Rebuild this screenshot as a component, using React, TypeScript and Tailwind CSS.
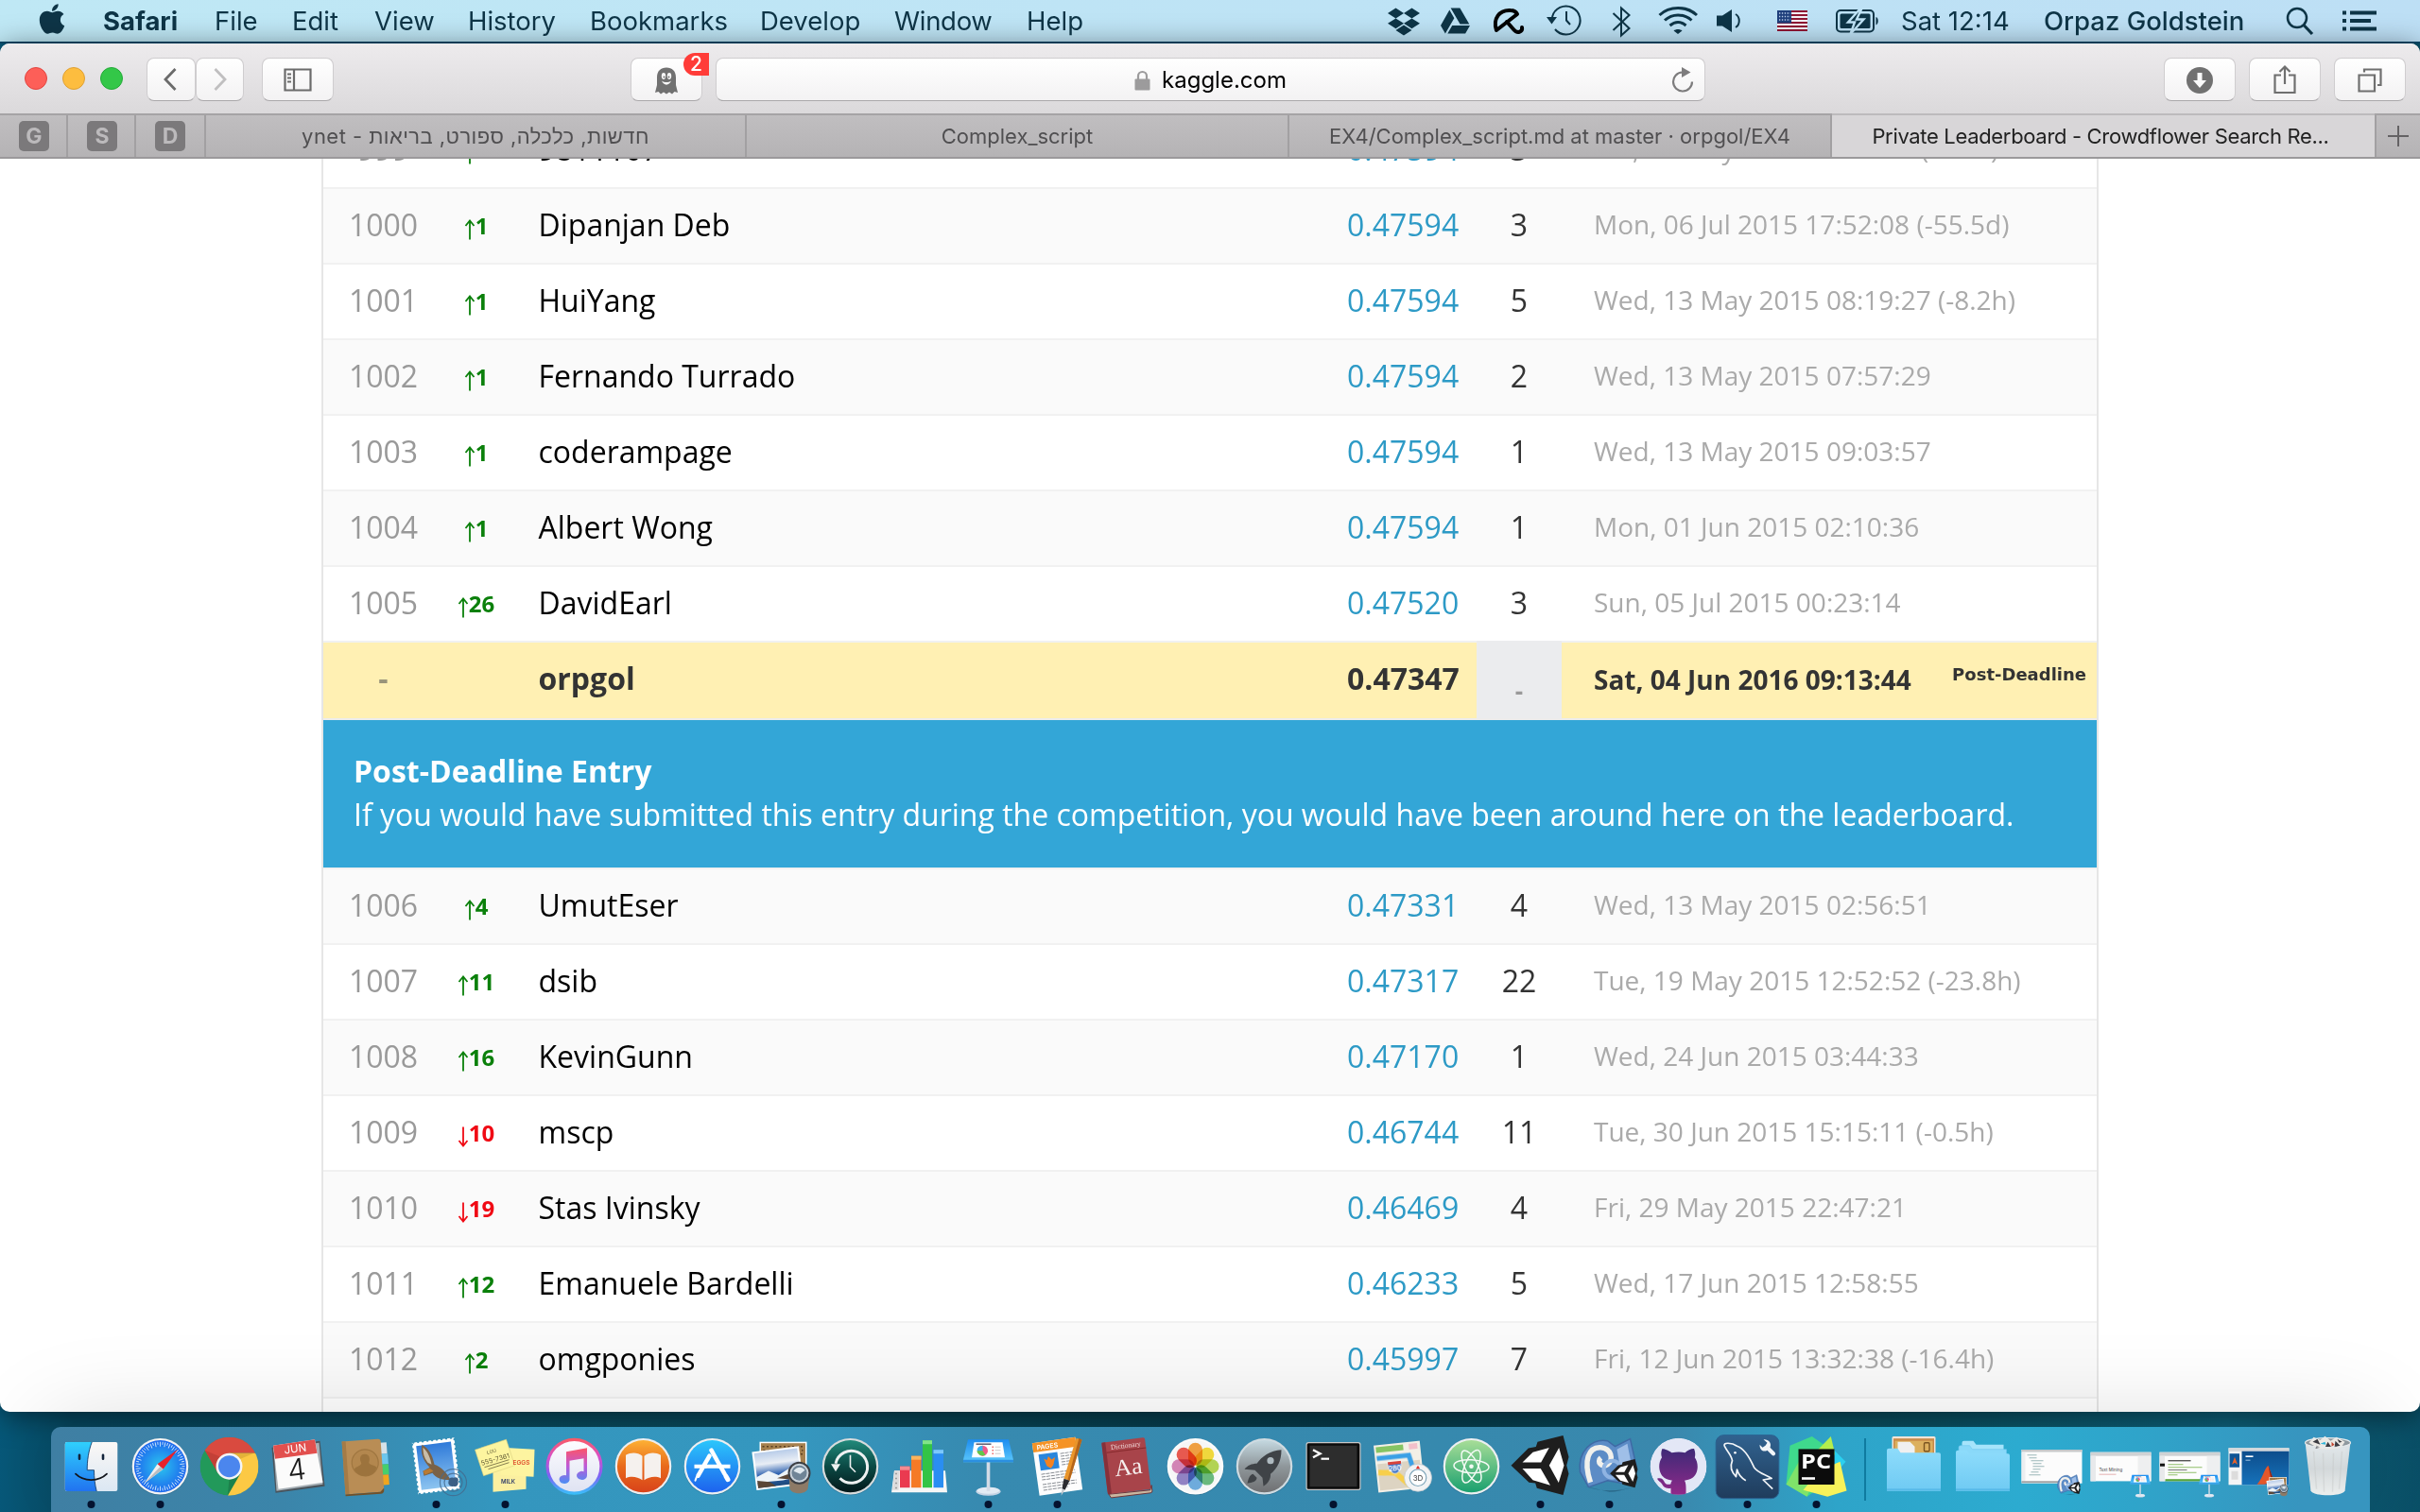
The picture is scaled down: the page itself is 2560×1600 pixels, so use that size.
import React from 'react';
import { FaApple, FaDropbox, FaGoogleDrive } from 'react-icons/fa';

/* ---------- Data ---------- */

type Row = { rank: string; delta: number; name: string; score: string; entries: string; date: string };

const above: Row[] = [
  { rank: '999', delta: 1, name: '9811107', score: '0.47594', entries: '3', date: 'Sat, 16 May 2015 18:03:27 (-1.7h)' },
  { rank: '1000', delta: 1, name: 'Dipanjan Deb', score: '0.47594', entries: '3', date: 'Mon, 06 Jul 2015 17:52:08 (-55.5d)' },
  { rank: '1001', delta: 1, name: 'HuiYang', score: '0.47594', entries: '5', date: 'Wed, 13 May 2015 08:19:27 (-8.2h)' },
  { rank: '1002', delta: 1, name: 'Fernando Turrado', score: '0.47594', entries: '2', date: 'Wed, 13 May 2015 07:57:29' },
  { rank: '1003', delta: 1, name: 'coderampage', score: '0.47594', entries: '1', date: 'Wed, 13 May 2015 09:03:57' },
  { rank: '1004', delta: 1, name: 'Albert Wong', score: '0.47594', entries: '1', date: 'Mon, 01 Jun 2015 02:10:36' },
  { rank: '1005', delta: 26, name: 'DavidEarl', score: '0.47520', entries: '3', date: 'Sun, 05 Jul 2015 00:23:14' },
];

const below: Row[] = [
  { rank: '1006', delta: 4, name: 'UmutEser', score: '0.47331', entries: '4', date: 'Wed, 13 May 2015 02:56:51' },
  { rank: '1007', delta: 11, name: 'dsib', score: '0.47317', entries: '22', date: 'Tue, 19 May 2015 12:52:52 (-23.8h)' },
  { rank: '1008', delta: 16, name: 'KevinGunn', score: '0.47170', entries: '1', date: 'Wed, 24 Jun 2015 03:44:33' },
  { rank: '1009', delta: -10, name: 'mscp', score: '0.46744', entries: '11', date: 'Tue, 30 Jun 2015 15:15:11 (-0.5h)' },
  { rank: '1010', delta: -19, name: 'Stas Ivinsky', score: '0.46469', entries: '4', date: 'Fri, 29 May 2015 22:47:21' },
  { rank: '1011', delta: 12, name: 'Emanuele Bardelli', score: '0.46233', entries: '5', date: 'Wed, 17 Jun 2015 12:58:55' },
  { rank: '1012', delta: 2, name: 'omgponies', score: '0.45997', entries: '7', date: 'Fri, 12 Jun 2015 13:32:38 (-16.4h)' },
];

/* ---------- Menu bar ---------- */

/* A menu-bar glyph drawn on a 44px high strip that starts at x. */
function Glyph({ x, w, children }: { x: number; w: number; children: React.ReactNode }) {
  return (
    <svg width={w} height={44} viewBox={`${x} 0 ${w} 44`} className="shrink-0 overflow-visible" fill="none" stroke="#0e3547" strokeWidth={2}>
      {children}
    </svg>
  );
}

function MenuBar() {
  return (
    <div className="flex h-[46px] shrink-0 items-start border-b-2 border-[#064868] bg-[#c0e6f6] bg-linear-to-r from-[#bfe8f5] to-[#bddff5] pl-[41px] text-[27.5px] leading-[44px] whitespace-pre text-[#0e3547]">
      <FaApple className="mt-[2px] h-[36px] w-[28px] shrink-0" />
      <span className="ml-[40px] w-[118px] font-bold">Safari</span>
      <span className="w-[82px]">File</span>
      <span className="w-[87px]">Edit</span>
      <span className="w-[99px]">View</span>
      <span className="w-[129px]">History</span>
      <span className="w-[180px]">Bookmarks</span>
      <span className="w-[142px]">Develop</span>
      <span className="w-[140px] tracking-[-0.3px]">Window</span>
      <span className="w-[100px]">Help</span>
      <div className="ml-[282px] flex">
        <FaDropbox className="mt-[5px] h-[36px] w-[34px]" />
        <FaGoogleDrive className="mt-[5px] ml-[22px] h-[34px] w-[31px]" />
        <Glyph x={1555} w={70}>
          <g stroke="#000" strokeWidth={4} strokeLinecap="round" strokeLinejoin="round">
            <path d="M1583 32 C1579 20 1586 10 1598 11 C1602 11 1604 13 1605 15 Z" fill="none" />
            <path d="M1594 23 L1601 31 C1605 36 1611 34 1610 29" />
          </g>
        </Glyph>
        <Glyph x={1625} w={65}>
          <path d="M1642 18 A15 15 0 1 1 1645 31" />
          <path d="M1636 18 h11 l-5.5 7.5 z" fill="#0e3547" stroke="none" />
          <path d="M1657 12 v9.5 l4 4.5" />
        </Glyph>
        <Glyph x={1690} w={50}>
          <path d="M1706.500 14 L1723.500 30 L1715 37.500 V8.500 L1723.500 16 L1706.500 32" />
        </Glyph>
        <Glyph x={1740} w={65}>
          <g strokeWidth={3}>
            <path d="M1755.500 16 C1766 6 1784 6 1795 16" />
            <path d="M1761 21.500 C1769 14 1781 14 1789.500 21.500" />
            <path d="M1766.500 27 C1772 22.500 1778 22.500 1783.500 27" />
          </g>
          <path d="M1770.500 32.500 C1773 30.500 1777 30.500 1779.500 32.500 L1775 36 Z" fill="#0e3547" stroke="none" />
        </Glyph>
        <Glyph x={1805} w={60}>
          <path d="M1816 16.500 h6 l10 -6.500 v24 l-10 -6.500 h-6 z" fill="#0e3547" stroke="none" />
          <path d="M1836 15 C1841 18 1841 26 1836 29" />
        </Glyph>
        <Glyph x={1865} w={70}>
          <rect x={1880} y={11} width={32} height={22} fill="#f4f0f4" stroke="none" />
          {[0, 1, 2, 3, 4, 5].map((i) => (
            <rect key={i} x={1880} y={11 + i * 4} width={32} height={2} fill="#8e1733" stroke="none" />
          ))}
          <rect x={1880} y={11} width={15} height={13.500} fill="#1f3f7c" stroke="none" />
          <path d="M1882 14 h12 M1882 17.500 h12 M1882 21 h12" stroke="#bcd0ea" strokeWidth={1.300} strokeDasharray="1.300 1.600" />
        </Glyph>
        <Glyph x={1935} w={76}>
          <rect x={1943} y={11} width={39} height={22.500} rx={4} />
          <path d="M1984.500 18 c3 1 3 7 0 8.500 z" fill="#0e3547" stroke="none" />
          <rect x={1946.500} y={14.500} width={32} height={15.500} rx={1.500} fill="#0e3547" stroke="none" />
          <path d="M1968 9 L1955 23.500 H1962 L1957.500 36 L1971.500 20.500 H1964 L1969.500 9 Z" fill="#0e3547" stroke="#c0e4f7" strokeWidth={2.400} />
        </Glyph>
      </div>
      <span className="w-[151px]">Sat 12:14</span>
      <span className="w-[242px] font-medium">Orpaz Goldstein</span>
      <Glyph x={2404} w={156}>
        <circle cx={2430} cy={19} r={10} strokeWidth={2.500} />
        <path d="M2437 26.500 L2446 36" strokeWidth={3.200} />
        <path d="M2478 13.500 h4 M2486 13.500 h28 M2478 22 h4 M2486 22 h22 M2478 30.500 h4 M2486 30.500 h28" strokeWidth={4} />
      </Glyph>
    </div>
  );
}

/* ---------- Safari chrome ---------- */

function ToolButton({ className, children }: { className: string; children: React.ReactNode }) {
  return (
    <div className={`flex h-[46px] shrink-0 items-center justify-center rounded-[8px] border border-[#cfcdcf] border-b-[#aaa8aa] bg-linear-to-b from-white to-[#f3f2f3] pt-[2px] ${className}`}>
      {children}
    </div>
  );
}

function Toolbar() {
  return (
    <div className="flex h-[74px] shrink-0 items-start bg-linear-to-b from-[#edebed] to-[#dbd9db] pt-[15px] pl-[26px]">
      <div className="mt-[10px] flex gap-4">
        <div className="h-6 w-6 rounded-full border border-[#e2443f] bg-[#fd5f58]" />
        <div className="h-6 w-6 rounded-full border border-[#dfa033] bg-[#fdbd3f]" />
        <div className="h-6 w-6 rounded-full border border-[#23aa38] bg-[#33c748]" />
      </div>
      <ToolButton className="ml-[25px] w-[52px]">
        <svg width={14} height={26} fill="none" stroke="#6b6b6b" strokeWidth={2.800} className="-mt-[3px] -ml-[3px]"><path d="M12.500 2 L2 13 L12.500 24" /></svg>
      </ToolButton>
      <ToolButton className="w-[51px]">
        <svg width={14} height={26} fill="none" stroke="#c0bfc0" strokeWidth={2.800} className="-mt-[3px]"><path d="M1.500 2 L12 13 L1.500 24" /></svg>
      </ToolButton>
      <ToolButton className="ml-[19px] w-[76px]">
        <svg width={30} height={26} fill="none" stroke="#6b6b6b" strokeWidth={2.200}>
          <path d="M1.500 1.500 h27 v22 h-27 z M11 1.500 v22 M4 6.500 h4 M4 10.500 h4 M4 14.500 h4" />
        </svg>
      </ToolButton>
      <div className="relative ml-[314px]">
        <ToolButton className="w-[76px]">
          <svg width={24} height={29} viewBox="0 0 24 29">
            <path d="M2 11 C2 4 6 0.500 12 0.500 S22 4 22 11 V19 L24 27 L20.500 26 L18 28.500 L15 26.500 L12 28.500 L9 26.500 L6 28.500 L3.500 26 L0 27 L2 19 Z" fill="#717171" />
            <ellipse cx={9} cy={9.500} rx={2.200} ry={3.400} fill="#f8f8f8" />
            <ellipse cx={15} cy={9.500} rx={2.200} ry={3.400} fill="#f8f8f8" />
            <circle cx={9.500} cy={10.500} r={1} fill="#717171" />
            <circle cx={14.500} cy={10.500} r={1} fill="#717171" />
            <path d="M7 14.500 C9 20 15 20 17 14.500 C14 16.500 10 16.500 7 14.500 Z" fill="#f8f8f8" />
          </svg>
        </ToolButton>
        <span className="absolute -top-[5px] left-[56px] h-[24px] w-[27px] rounded-l-full rounded-r-[9px] bg-[#ff3c38] text-center text-[21px] leading-[24px] font-medium text-white">2</span>
      </div>
      <ToolButton className="relative ml-[14px] w-[1047px] gap-[12px]">
        <svg width={17} height={22} viewBox="0 0 17 22"><path d="M4 10 V6.500 a4.500 4.500 0 0 1 9 0 V10" fill="none" stroke="#9c9b9c" strokeWidth={2.200} /><rect x={0.500} y={9.500} width={16} height={12} rx={1} fill="#9c9b9c" /></svg>
        <span className="text-[24px] leading-[44px] text-black">kaggle.com</span>
        <svg className="absolute top-[8px] right-[11px]" width={24} height={28} fill="none">
          <path d="M11.500 6.500 A10 10 0 1 0 22 16.500" stroke="#7d7c7d" strokeWidth={2.200} />
          <path d="M11 1 L20.500 6.500 L11 12 Z" fill="#7d7c7d" />
        </svg>
      </ToolButton>
      <ToolButton className="ml-[485px] w-[76px]">
        <svg width={28} height={28}><circle cx={14} cy={14} r={14} fill="#717171" /><path d="M11.500 6 h5 v8 h4.500 L14 22 L7 14 h4.500 z" fill="#fafafa" /></svg>
      </ToolButton>
      <ToolButton className="ml-[14px] w-[76px]">
        <svg width={24} height={32} fill="none" stroke="#6f6f6f" strokeWidth={2.200} className="-mt-[3px]"><path d="M8 11.500 H1.500 V30 H22.500 V11.500 H16 M12 21 V2.500 M6.500 8 L12 2.500 L17.500 8" /></svg>
      </ToolButton>
      <ToolButton className="ml-[14px] w-[76px]">
        <svg width={26} height={26} fill="none" stroke="#6f6f6f" strokeWidth={2.200}><path d="M1.500 7.500 H18 V24.500 H1.500 Z M7 4.500 V1.500 H24.500 V18 H21" /></svg>
      </ToolButton>
    </div>
  );
}

function PinnedTab({ letter, className }: { letter: string; className: string }) {
  return (
    <div className={`flex h-full shrink-0 items-center border-r-2 border-[#a2a0a2] ${className}`}>
      <div className="h-8 w-8 rounded-[5px] bg-[#7b797b] text-center text-[23px] leading-[32px] font-bold text-[#bcbabc]">{letter}</div>
    </div>
  );
}

function TabBar() {
  return (
    <div className="flex h-[48px] shrink-0 items-stretch border-y-2 border-t-[#a5a3a5] border-b-[#9b999b] bg-linear-to-b from-[#c0bec0] to-[#b5b3b5] text-center text-[22px] leading-[45px] whitespace-nowrap text-[#504f51]">
      <PinnedTab letter="G" className="w-[72px] pl-[20px]" />
      <PinnedTab letter="S" className="w-[72px] pl-[20px]" />
      <PinnedTab letter="D" className="w-[74px] pl-[20px]" />
      <div className="w-[572px] border-r-2 border-[#a2a0a2] font-['Inter','Liberation_Sans',sans-serif] tracking-[0.45px]">ynet - חדשות, כלכלה, ספורט, בריאות</div>
      <div className="w-[574px] border-r-2 border-[#a2a0a2]">Complex_script</div>
      <div className="w-[574px] border-r-2 border-[#a2a0a2]">EX4/Complex_script.md at master · orpgol/EX4</div>
      <div className="-mt-[2px] w-[574px] border-t-2 border-[#bcbabc] bg-[#d8d6d8] pr-[6px] tracking-[-0.33px] text-[#222]">Private Leaderboard - Crowdflower Search Re...</div>
      <div className="flex flex-1 items-center justify-center border-l-2 border-[#a2a0a2] pr-[1px]">
        <svg width={24} height={24} stroke="#646264" strokeWidth={2}><path d="M12 1 V23 M1 12 H23" /></svg>
      </div>
    </div>
  );
}

/* ---------- Leaderboard ---------- */

function LeaderRow({ row, shaded }: { row: Row; shaded: boolean }) {
  const up = row.delta > 0;
  return (
    <div className={`flex h-[80px] shrink-0 border-b-2 border-[#f1f1f1] text-[32px] leading-[75px] whitespace-nowrap ${shaded ? 'bg-[#fafafa]' : 'bg-white'}`}>
      <div className="w-[127px] text-center text-[#999]">{row.rank}</div>
      <div className={`flex w-[69px] justify-center text-[24px] leading-[77px] font-bold ${up ? 'text-[#0b800b]' : 'text-[#f00a14]'}`}>
        <svg width={12} height={22} fill="none" stroke="currentColor" strokeWidth={1.800} className={`mt-[32px] ${up ? '' : 'rotate-180'}`}>
          <path d="M6 1 V21.500 M1.500 7 L6 1.500 L10.500 7" />
        </svg>
        <span>{Math.abs(row.delta)}</span>
      </div>
      <div className="w-[887px] pl-[31.5px] text-black">{row.name}</div>
      <div className="w-[137px] text-[#2d9ac6]">{row.score}</div>
      <div className="w-[90px] text-center text-[#333]">{row.entries}</div>
      <div className="pl-[34px] text-[28px] leading-[74px] text-[#aaa]">{row.date}</div>
    </div>
  );
}

function Leaderboard() {
  return (
    <div className="mx-auto -mt-[48px] flex w-[1880px] flex-col border-x-2 border-[#e6e6e6] font-['Open_Sans',sans-serif]">
      {above.map((r, i) => (
        <LeaderRow key={r.rank} row={r} shaded={i % 2 === 1} />
      ))}
      <div className="flex h-[82px] shrink-0 border-b-2 border-[#ececec] bg-[#fff0b3] text-[32px] leading-[75px] font-bold whitespace-nowrap text-[#333]">
        <div className="w-[127px] text-center leading-[76px] text-[#99947a]">-</div>
        <div className="w-[956px] pl-[100.5px]">orpgol</div>
        <div className="w-[137px]">0.47347</div>
        <div className="-mt-[2px] h-[82px] w-[90px] bg-[#ebecee] text-center text-[26px] leading-[106px] text-[#999]">-</div>
        <div className="pl-[34px] text-[28px] leading-[78px]">Sat, 04 Jun 2016 09:13:44</div>
        <div className="ml-auto pr-[11px] font-['DejaVu_Sans',sans-serif] text-[18px] leading-[68px]">Post-Deadline</div>
      </div>
      <div className="h-[158px] shrink-0 border-b-2 border-[#f1f1f1] bg-[#33a6d7] pt-[31px] pl-[32px] text-[32px] leading-[46px] whitespace-nowrap text-white">
        <div className="font-bold">Post-Deadline Entry</div>
        <div>If you would have submitted this entry during the competition, you would have been around here on the leaderboard.</div>
      </div>
      {below.map((r, i) => (
        <LeaderRow key={r.rank} row={r} shaded={i % 2 === 0} />
      ))}
      <div className="h-[14px] shrink-0 bg-white" />
    </div>
  );
}

/* ---------- Dock ---------- */

/* One dock cell; (0,0) is the middle of the icon. */
function Cell({ dot, children }: { dot?: boolean; children: React.ReactNode }) {
  return (
    <svg viewBox="-36.5 -41.7 73 90" className="h-[90px] w-[73px] shrink-0 overflow-visible">
      {children}
      {dot && <circle cx={0} cy={40.300} r={4} fill="#04122f" />}
    </svg>
  );
}

function Disc({ fill, rim = '#eceff1' }: { fill: string; rim?: string }) {
  return (
    <>
      <circle r={30} cy={0.500} fill="#1b4a66" opacity={0.350} />
      <circle r={29.800} fill={rim} />
      <circle r={27.600} fill={fill} />
    </>
  );
}

function Defs() {
  const g = (id: string, stops: string[]) => (
    <linearGradient id={id} x1="0" y1="0" x2="0" y2="1">
      {stops.map((c, i) => (
        <stop key={i} offset={i / (stops.length - 1)} stopColor={c} />
      ))}
    </linearGradient>
  );
  return (
    <svg width={0} height={0} className="absolute">
      <defs>
        {g('finder', ['#2fd0fd', '#2173f0'])}
        {g('finderR', ['#fbf8f6', '#dbe7f3'])}
        <radialGradient id="safariC"><stop offset="0" stopColor="#2bc6ee" /><stop offset="1" stopColor="#1d68ee" /></radialGradient>
        {g('sky', ['#2f7ad9', '#8cc4f0'])}
        {g('itunes', ['#fb5b62', '#d750c9', '#7d62f5', '#38c2fb'])}
        {g('itunesIn', ['#fdfcff', '#dfe3f2'])}
        {g('note', ['#fd5566', '#c058d6', '#4a8ef5'])}
        {g('ibooks', ['#fdb034', '#e86a1c', '#d9431a'])}
        {g('store', ['#2cc6fb', '#1d62ee'])}
        {g('tm', ['#21897a', '#0b4a45', '#03181a'])}
        {g('sea', ['#b9cde9', '#e9eef5', '#2a5fae', '#1e4a7a'])}
        {g('key', ['#1d8cf0', '#5cc8fb'])}
        {g('launch', ['#c4d8e0', '#8f979b', '#6f7072'])}
        {g('atom', ['#a7dd97', '#1aa06f'])}
        {g('mysql', ['#31628f', '#1f3c5c'])}
        {g('cat', ['#3e2a77', '#92298a'])}
        {g('folder', ['#8edcfb', '#6fcaf3'])}
        {g('bin', ['#e8eaec', '#d9dadb', '#f1f0ee'])}
        {g('ppt', ['#0d4d8c', '#1672ba'])}
        <clipPath id="chromeClip"><circle r={31} /></clipPath>
        <clipPath id="catClip"><circle r={30} /></clipPath>
      </defs>
    </svg>
  );
}

function KeynoteStand() {
  return (
    <g>
      <ellipse cy={26.500} rx={13} ry={4.500} fill="#c5d3e4" />
      <ellipse cy={25.500} rx={12} ry={3.500} fill="#e3ebf4" />
      <rect x={-1.800} y={-5} width={3.600} height={31} fill="#d3dbe6" />
      <path d="M-21.500 -28.500 H21.500 L26.500 -7 V-4.500 H-26.500 V-7 Z" fill="url(#key)" />
      <path d="M-26.500 -7 H26.500 V-4.500 H-26.500 Z" fill="#2b8fe0" />
      <path d="M-15 -25.500 H15 L17.500 -9.500 H-17.500 Z" fill="#fff" />
      <circle cx={-6} cy={-16.500} r={5.500} fill="#f05a8c" />
      <path d="M-6 -16.500 V-22 A6 5.500 0 0 0 -12 -16.500 Z" fill="#36b4f0" />
      <path d="M-6 -16.500 H-12 A6 5.500 0 0 0 -3 -12 Z" fill="#62c94a" />
      <path d="M4 -20.500 h1.500 M4 -17 h1.500 M4 -13.500 h1.500" stroke="#e66" strokeWidth={1.500} />
      <path d="M7 -20.500 h6 M7 -17 h6 M7 -13.500 h6" stroke="#ccc" strokeWidth={1} />
      <path d="M-13 -23.500 h16" stroke="#667" strokeWidth={1.600} />
    </g>
  );
}

function UnityMark() {
  return (
    <g>
      <path d="M-31 -1 L-12.700 -19.300 L-4.700 -20.700 L-3 -26 L24 -32.700 L30 -10 L27.700 -1 L30 7.700 L24 30.300 L-3.700 23 L-5.300 17.700 L-12 17 Z" fill="#1e1e1e" />
      <path d="M-19 -4.300 L-8 -15 L9.300 -19.700 L0.700 -4.300 Z M-19 2.300 H0.300 L10.500 20 L-8 14.500 Z M9.300 -1 L19.700 -19.700 L25 -1 L19.300 17.300 Z" fill="#fff" />
    </g>
  );
}

function MonoMark() {
  return (
    <g>
      <path d="M-26 21 Q0 30 28 21 Q10 27 0 27 Z" fill="#1b4a66" opacity={0.500} />
      <path d="M-31 6 C-34 -16 -18 -30 -2 -27 L6 -21 L22 -29 L29 2 L26 20 L-2 15 L-22 22 Z" fill="#5c8cc6" stroke="#3f6aa5" strokeWidth={1.500} />
      <path d="M8 -18 L19 -24 L24 2 L12 5 Z" fill="#9fbfe8" />
      <path d="M-20 17 C-28 -6 -22 -21 -9 -20 C2 -19 5 -7 -2 -2 C-8 2 -14 -5 -9 -9" fill="none" stroke="#f2f1ec" strokeWidth={5.500} />
      <circle cx={3} cy={3} r={9} fill="none" stroke="#8fb4e2" strokeWidth={4} />
    </g>
  );
}

function PhotoStack() {
  return (
    <g>
      <rect x={-23} y={-26} width={50} height={36} fill="#fff" />
      <rect x={-21.500} y={-24.500} width={47} height={33} fill="#a5804e" />
      <path d="M-20 -21 h44 M-19 -17 h42 M-20 -13 h44" stroke="#5a3f22" strokeWidth={1.500} strokeDasharray="2 2.500" />
      <g transform="rotate(-7)">
        <rect x={-29} y={-19} width={50} height={41} fill="#fff" />
        <rect x={-27} y={-17} width={46} height={37} fill="url(#sea)" />
        <path d="M-27 8 L-14 3 L-4 9 L8 3 L19 6 V13 L0 15 L-27 14 Z" fill="#eef4f8" />
        <path d="M-27 12 L-14 15 L-8 20 H-27 Z M-6 12 L6 9 L8 15 Z" fill="#5a4636" />
      </g>
      <path d="M8 9 L9 24 C12 30 25 30 28 24 L30 9 Z" fill="#8d7a66" />
      <circle cx={19} cy={7} r={12} fill="#3c3f44" />
      <circle cx={19} cy={7} r={10} fill="#c9d2da" />
      <circle cx={19} cy={7} r={8} fill="#6f8496" />
      <path d="M13 5 C16 0 22 0 25 4 L20 8 Z" fill="#dfe8ee" />
    </g>
  );
}

const ticks = Array.from({ length: 60 }, (_, i) => i * 6);
const petals: [number, string][] = [
  [0, '#f79a2e'], [45, '#f6dc2a'], [90, '#b0d645'], [135, '#5cb873'], [180, '#62a9e0'], [225, '#8b79c4'], [270, '#d57bb4'], [315, '#ee4a3e'],
];
const stampDots = [-26, -21, -16, -11, -6, -1, 4, 9, 14, 19, 24];

function Dock() {
  return (
    <div className="ml-[54px] flex h-[90px] w-[2453px] shrink-0 rounded-t-[10px] bg-[linear-gradient(90deg,#3f7fa3_0%,#3b85aa_10%,#3496be_19%,#3597bf_32%,#378ab0_40%,#3689ae_60%,#3a88ad_70%,#2ea4c9_77%,#2cabd0_85%,#2fa4ca_90%,#3795bf_97%)] pl-[5.5px] shadow-[0_0_100px_rgba(0,0,0,0.17)]">
      <div className="flex shrink-0">
        <Cell dot>
          <rect x={-27.700} y={-25.700} width={55.500} height={52} rx={2} fill="url(#finderR)" />
          <path d="M0.700 -25.700 C-3 -16 -4.300 -6 -4.300 4 H3 C3 12 4 20 5.700 26.300 H-25.700 a2 2 0 0 1 -2 -2 V-23.700 a2 2 0 0 1 2 -2 Z" fill="url(#finder)" />
          <path d="M0.700 -25.700 C-3 -16 -4.300 -6 -4.300 4 H3 C3 12 4 20 5.700 26.300" fill="none" stroke="#16406e" strokeWidth={0.900} />
          <path d="M-12.500 -12 V-8 M12.500 -12 V-8" stroke="#12233a" strokeWidth={2.600} strokeLinecap="round" />
          <path d="M-16.500 8 C-8 16.500 8 16.500 16.500 8" fill="none" stroke="#12161c" strokeWidth={1.800} strokeLinecap="round" />
        </Cell>
        <Cell dot>
          <Disc fill="url(#safariC)" rim="#f3f3f4" />
          {ticks.map((a) => (
            <path key={a} d={a % 12 === 0 ? 'M0 -26 V-21' : 'M0 -26 V-23'} stroke="#cfe6fb" strokeWidth={0.900} transform={`rotate(${a})`} />
          ))}
          <path d="M18.500 -18 L3 3 L-3 -2.500 Z" fill="#e8202a" />
          <path d="M-17 18 L-3 -2.500 L3 3 Z" fill="#f1efee" />
          <path d="M-17 18 L0 0.200 L3 3 Z" fill="#b9bcc0" />
        </Cell>
        <Cell>
          <g clipPath="url(#chromeClip)">
            <circle r={31} fill="#22995a" />
            <path d="M-31 -31 H31 V-14 H0 L-12.100 7 L-25.800 -17 Z" fill="#d94a3f" />
            <path d="M0 -14 H31 V31 H-1.700 L12.100 7 L0 0 Z" fill="#fcc944" />
            <path d="M0 -14 H26 L12 -8 Z" fill="#c99b2e" opacity={0.500} />
            <path d="M-25.800 -17 L-12.100 7 L-9 -10 Z" fill="#9c2f28" opacity={0.350} />
            <path d="M-1.700 31 L12.100 7 L0 13 Z" fill="#156a3b" opacity={0.500} />
          </g>
          <circle r={14} fill="#f5f5f5" />
          <circle r={11.500} fill="#4b86ee" />
        </Cell>
        <Cell>
          <path d="M-28 -20 L-24 28 L28 21 L23 -27 Z" fill="#4a545c" />
          <path d="M-26 -18 L-23 26 L26 19 L22 -25 Z" fill="#a6afb5" />
          <path d="M-26.500 -22 L17.500 -28.500 L26 17 L-21 24 Z" fill="#fbfbfb" />
          <path d="M-26.500 -22 L17.500 -28.500 L20 -14 L-24.500 -8 Z" fill="#e2504e" />
          <g className="font-['Inter']" textAnchor="middle">
            <text transform="rotate(-7)" x={-1} y={-15} fontSize={11.500} fill="#fff">JUN</text>
            <text transform="rotate(-7)" x={-2} y={14} fontSize={31} fontWeight={300} fill="#1b1b1b">4</text>
          </g>
        </Cell>
        <Cell>
          <g transform="rotate(-4)">
            <rect x={14} y={-24} width={8} height={12} fill="#d7e2e8" />
            <rect x={14} y={-12} width={8.500} height={11} fill="#6cc7ee" />
            <rect x={14} y={-1} width={8.500} height={11} fill="#46cf6c" />
            <rect x={13} y={10} width={9} height={11} fill="#f0a51e" />
            <path d="M-25 -28 H13 a3 3 0 0 1 3 3 V24 a4 4 0 0 1 -4 4 H-25 Z" fill="#b98d55" />
            <path d="M-25 -28 h4 V28 h-4 Z" fill="#a47b47" />
            <path d="M-25 28 H12 L16 24 V26 a4 4 0 0 1 -4 4 H-25 Z" fill="#71512a" />
            <circle cx={-2} cy={-4} r={14} fill="#b3874e" stroke="#9f7640" strokeWidth={1.200} />
            <path d="M-2 -13 c5 0 6 5 4 9 c0 3 6 3 8 6 a13 13 0 0 1 -24 0 c2 -3 8 -3 8 -6 c-2 -4 -1 -9 4 -9 Z" fill="#9c733d" />
          </g>
        </Cell>
        <Cell dot>
          <g transform="rotate(-7)">
            <rect x={-22.500} y={-28} width={45} height={55} fill="#fff" />
            {stampDots.map((d) => (
              <g key={d} fill="#3790b7">
                <circle cx={-22.500} cy={d} r={1.200} />
                <circle cx={22.500} cy={d} r={1.200} />
              </g>
            ))}
            {stampDots.slice(1, 10).map((d) => (
              <g key={d} fill="#3790b7">
                <circle cx={d} cy={-28} r={1.200} />
                <circle cx={d} cy={27} r={1.200} />
              </g>
            ))}
            <rect x={-18.500} y={-24} width={37} height={47} fill="url(#sky)" />
          </g>
          <path d="M-15 -23 C-8 -19 -4 -12 -2 -2 C5 0 12 8 15 14 C8 15 0 13 -4 7 L-13 10 L-14 5 L-7 1 C-14 -6 -17 -15 -15 -23 Z" fill="#7a6247" />
          <path d="M-14 -20 C-9 -16 -6 -8 -5 -2 L-9 -4 C-13 -9 -14 -14 -14 -20 Z" fill="#c9bda8" />
          <path d="M-14 5 L-7 2 L-3 5 L-12 9 Z" fill="#b97b34" />
          <g fill="none" stroke="#44698c" strokeWidth={1.200} opacity={0.800}><circle cx={18} cy={17} r={14} /><circle cx={18} cy={17} r={9.500} /></g>
          <path d="M18 12 c5 -2 6 2 5 4 c1 4 -2 6 -5 5 c-3 1 -6 -2 -5 -5 c0 -3 2 -5 5 -4 Z" fill="#3a5f85" />
        </Cell>
        <Cell dot>
          <path d="M-13 1 L22 3 V24 L-13 27 Z" fill="#fbf0a0" />
          <path d="M-4 -20 L31 -18 L30 11 L-5 9 Z" fill="#fdf4a0" />
          <path d="M-32 -17.500 L1 -28.500 L10 -1 L-23 10 Z" fill="#fdf59f" stroke="#d9cf7d" strokeWidth={0.600} />
          <g className="font-['Inter']" textAnchor="middle">
            <text fontSize={7} fill="#66603a" transform="translate(-10 -5) rotate(-16)">555-7361</text>
            <text fontSize={5} fill="#66603a" transform="translate(-14 -14) rotate(-16)">LOU</text>
            <text x={17} y={-2} fontSize={6.500} fontWeight={600} fill="#e0512f">EGGS</text>
            <text x={3} y={18} fontSize={6} fontWeight={600} fill="#33406b">MILK</text>
          </g>
          <path d="M-22 1 L4 -7 M-18 3 L4 -4" stroke="#66603a" strokeWidth={0.800} />
        </Cell>
        <Cell>
          <circle r={30} fill="url(#itunes)" />
          <circle r={26.800} fill="url(#itunesIn)" />
          <path d="M-8.500 -15.500 L13.500 -19.500 V9.500 a5.500 4.500 0 1 1 -3.500 -4 V-8.500 L-5 -6 V14.500 a5.500 4.500 0 1 1 -3.500 -5 Z" fill="url(#note)" />
        </Cell>
        <Cell>
          <Disc fill="url(#ibooks)" />
          <path d="M-1 -11 C-6 -15 -13 -15 -18.500 -12 V12.500 C-13 10 -6 11 -1 14.500 Z M1 -11 C6 -15 13 -15 18.500 -12 V12.500 C13 10 6 11 1 14.500 Z" fill="#f5f1ee" />
        </Cell>
        <Cell>
          <Disc fill="url(#store)" />
          <g stroke="#fff" strokeLinecap="round">
            <path d="M-19 0 H-6 M6 0 H19" strokeWidth={4} strokeLinecap="butt" />
            <path d="M-3 -11 L-15 10" strokeWidth={4.500} />
            <path d="M-1 -17 L13 8" strokeWidth={4.500} />
            <path d="M-8 0 H8" strokeWidth={4} />
            <path d="M-16.500 11 L-18 15" strokeWidth={2} />
            <path d="M14.500 10.500 L16.500 14" strokeWidth={5} />
          </g>
        </Cell>
        <Cell dot><PhotoStack /></Cell>
        <Cell>
          <Disc fill="url(#tm)" rim="#d7dcdd" />
          <path d="M-15.500 -3 A17 17 0 1 1 -11 12.500" fill="none" stroke="#eef1f1" strokeWidth={3} />
          <path d="M-20.500 -2.500 h10 l-5 8 z" fill="#eef1f1" />
          <path d="M0 -12 V0.500 L5.500 6" fill="none" stroke="#eef1f1" strokeWidth={1.600} />
        </Cell>
        <Cell>
          <path d="M-26.500 4.500 H27.500 L29.500 27.500 H-29.500 Z" fill="#f6f6f6" />
          <path d="M-26.500 4.500 H-21 L-22 25 H-28.500 Z" fill="#dcdcdc" />
          <path d="M-24.500 7 v17" stroke="#888" strokeWidth={1.500} strokeDasharray="1.500 3.500" />
          <rect x={-20.500} y={0} width={10.500} height={22.500} fill="#ea3a50" /><rect x={-20.500} y={0} width={10.500} height={4} fill="#f58a90" />
          <rect x={-8.500} y={-11} width={10.500} height={33.500} fill="#f57a26" /><rect x={-8.500} y={-11} width={10.500} height={4} fill="#fbb45c" />
          <rect x={3.500} y={-27.500} width={10} height={50} fill="#33c446" /><rect x={3.500} y={-27.500} width={10} height={4} fill="#82e48a" />
          <rect x={15} y={-17.500} width={10.500} height={40} fill="#2a8ef2" /><rect x={15} y={-17.500} width={10.500} height={4} fill="#7cc8fb" />
        </Cell>
        <Cell dot><KeynoteStand /></Cell>
        <Cell dot>
          <g transform="rotate(-8)">
            <rect x={-23} y={-28} width={46} height={56} fill="#fdfdfd" />
            <rect x={-23} y={-28} width={46} height={10} fill="#f59325" />
            <text x={-19} y={-20} fontSize={7} fontWeight={600} fill="#fff" className="font-['Inter']">PAGES</text>
            <rect x={-18} y={-15} width={20} height={17} fill="#2a86dc" />
            <path d="M-13 -10 l3 2 l2 -4 l3 4 l4 -2 l-3 8 l-3 3 l-4 -3 Z" fill="#f58220" />
            <path d="M5 -13 h13 M5 -10 h13 M5 -7 h13 M5 -4 h13 M5 -1 h13 M-18 6 h36 M-18 9 h36 M-18 12 h30 M-18 17 h36 M-18 20 h36 M-18 23 h26" stroke="#8b8f95" strokeWidth={1} strokeDasharray="4 1" />
          </g>
          <path d="M20 -30 L26 -28 L13 15 L7 13 Z" fill="#e9952a" />
          <path d="M23 -30 L26 -28 L13 15 L11 14 Z" fill="#b5651a" />
          <path d="M7 13 L13 15 L8 25 L5 23.500 Z" fill="#2c2c30" />
          <path d="M5 23.500 L8 25 L4 31 Z" fill="#c5c9ce" />
        </Cell>
        <Cell>
          <g transform="rotate(-7)">
            <path d="M-22 27 L22 28 L24 23 V29 a2 2 0 0 1 -2 2 H-20 Z" fill="#c9b6a0" stroke="#6a2326" strokeWidth={0.800} />
            <rect x={-23} y={-28} width={46} height={55} rx={2} fill="#a8444a" />
            <rect x={-23} y={-28} width={4} height={55} fill="#86303a" />
            <path d="M-19 -17 H23" stroke="#86292c" strokeWidth={1} />
            <g className="font-['Liberation_Serif']" textAnchor="middle">
              <text x={2} y={-19.500} fontSize={7.500} fill="#eed6d6">Dictionary</text>
              <text x={2} y={9} fontSize={25} fill="#f6efee">Aa</text>
            </g>
          </g>
        </Cell>
        <Cell>
          <Disc fill="#f7f7f7" rim="#fbfbfb" />
          {petals.map(([a, c]) => (
            <rect key={a} x={-7.500} y={-25} width={15} height={24} rx={7.500} fill={c} transform={`rotate(${a})`} className="opacity-90 mix-blend-multiply" />
          ))}
        </Cell>
        <Cell>
          <Disc fill="url(#launch)" rim="#cfdbe1" />
          <path d="M18 -17.500 C6 -17 -3 -10 -8 -3 C-13 -3 -18 -1 -21 3 L-10 4 L-2 12 L-1 21 C4 18 7 13 6.500 8 C14 2 18 -6 18 -17.500 Z" fill="#3f4347" />
          <path d="M-12 8 C-16 9 -17 14 -18 18 C-13 17 -8 16 -8 12 Z" fill="#3f4347" />
          <circle cx={6.500} cy={-6} r={3.600} fill="#aebac0" />
        </Cell>
        <Cell dot>
          <rect x={-29} y={-25.700} width={58} height={51} rx={2.500} fill="#c8c8c8" />
          <rect x={-27.800} y={-24.500} width={55.600} height={48.600} rx={1.500} fill="#0b0b0b" />
          <rect x={-25} y={-22} width={50} height={43.500} fill="#2d2d2d" />
          <path d="M-21.500 -17.500 L-14 -13.500 L-21.500 -9.500" fill="none" stroke="#fff" strokeWidth={2.400} />
          <path d="M-13 -8 H-4.500" stroke="#fff" strokeWidth={2.200} />
        </Cell>
        <Cell>
          <g transform="rotate(-6)">
            <rect x={-28} y={-25} width={49} height={50} fill="#f3efe6" />
            <rect x={-26} y={-23} width={29} height={6} fill="#86c464" />
            <rect x={9} y={-23} width={9} height={6} fill="#f2c0ca" />
            <rect x={-26} y={-5} width={45} height={28} fill="#ddd4c2" />
            <path d="M-26 -11 H8 L12 8" fill="none" stroke="#3aa0e6" strokeWidth={5} />
            <path d="M-26 4 L-8 6 L8 23" fill="none" stroke="#f7cf4a" strokeWidth={6} />
            <path d="M-15 -6 h14 c1 8 -3 12 -7 13 c-4 -1 -8 -5 -7 -13 Z" fill="#3f76c8" stroke="#fff" strokeWidth={0.800} />
            <path d="M-15 -6 h14 v3 h-14 Z" fill="#d8433c" />
            <text x={-8} y={3.500} fontSize={7} fontWeight={700} fill="#fff" textAnchor="middle" className="font-['Inter']">280</text>
          </g>
          <circle cx={16.500} cy={12} r={14.500} fill="#f2f3f4" stroke="#c0c6ca" strokeWidth={0.800} />
          <circle cx={16.500} cy={12} r={8.800} fill="#fff" stroke="#7fa6ba" strokeWidth={1.200} />
          <path d="M16.500 -1 l2.200 3.500 h-4.400 z" fill="#e3342b" />
          <text x={16.500} y={15} fontSize={8} fill="#444" textAnchor="middle" className="font-['Inter']">3D</text>
        </Cell>
        <Cell>
          <Disc fill="url(#atom)" />
          <g fill="none" stroke="#f3faf4" strokeWidth={1.500}>
            <ellipse rx={18.500} ry={7} transform="rotate(3)" />
            <ellipse rx={18.500} ry={7} transform="rotate(63)" />
            <ellipse rx={18.500} ry={7} transform="rotate(113)" />
          </g>
          <circle r={2.300} fill="#f3faf4" />
        </Cell>
        <Cell dot><UnityMark /></Cell>
        <Cell dot>
          <MonoMark />
          <g transform="translate(15.500 8) scale(0.48)"><UnityMark /></g>
        </Cell>
        <Cell dot>
          <g clipPath="url(#catClip)">
            <circle r={30} fill="#e3e7f6" />
            <path d="M-17.300 -18.500 C-14 -19 -9 -16 -7 -14.500 C-2 -15.500 3 -15.500 7 -14.500 C10 -17 14 -19 16.700 -18.500 C18 -15 18 -12 17.300 -9.500 C22 -3 21 8 15 12 C12 14 9 14.500 6.500 15 C8.500 18 8 24 8 31 H-8 V23 C-14 24 -16 21 -17.500 18.500 C-19 16 -21 16 -22.500 13 C-18 11.500 -16 14 -14.500 17 C-13 19.500 -10 19.500 -8 18.500 C-8 17 -7.500 16 -6.500 15 C-9 14.500 -12 14 -15 12 C-21 8 -22 -3 -17.500 -9.500 C-18.500 -12 -18.500 -15 -17.300 -18.500 Z" fill="url(#cat)" />
          </g>
        </Cell>
        <Cell dot>
          <rect x={-33.300} y={-33} width={66.600} height={67} rx={8} fill="url(#mysql)" stroke="#2a608f" strokeWidth={1} />
          <g fill="none" stroke="#f2f5f8" strokeWidth={1.700} strokeLinejoin="round">
            <path d="M-1.700 15 C-7 12 -10 7 -11 3.300 L-12 11 C-17 6 -19 1 -16 -6 C-17 -12 -21 -15 -24 -21 C-27 -26 -16 -25 -11 -21.500 C-3 -19 3 -8 7 1 C11 7 20 9 25.700 12.700 L16.700 14.300 L26.700 24" />
          </g>
          <circle cx={-13} cy={-14.500} r={1.300} fill="#fff" />
          <path d="M14 -27 L19 -22 L16 -20 L13 -23 C13 -16 18 -15 21 -17 L26 -12 a2 2 0 0 0 3 -3 L24 -20 C26 -25 22 -29 17 -28.500 L21 -25 L19 -22" fill="#f2f5f8" />
        </Cell>
        <Cell dot>
          <path d="M-28 -22 L-4.700 -31.700 L12 -20 L0 25 L-10 32 L-32 19 Z" fill="#3fd98c" />
          <path d="M-32 19 L-18 -6 L-5 20 L-10 32 Z" fill="#7fe36a" />
          <path d="M0 -16 L15.300 -31.700 L20 -12 Z" fill="#b4ee4d" />
          <path d="M19 -17 L31 -5 L20 8 Z" fill="#2bd0f0" />
          <path d="M25 -5 L32 25.700 L11.700 32 L-14 25 L4 4 Z" fill="#f8f25a" />
          <rect x={-19} y={-18.300} width={38} height={37.600} fill="#0c0c0c" />
          <text x={-16.500} y={1.800} fontSize={21} fontWeight={700} fill="#fff" textLength={32} lengthAdjust="spacingAndGlyphs" className="font-['Open_Sans']">PC</text>
          <rect x={-15.500} y={11.500} width={14} height={2.600} fill="#fff" />
        </Cell>
      </div>
      <div className="mt-[12px] ml-[14.5px] h-[66px] w-[2px] shrink-0 bg-[#0f7ba0]" />
      <div className="ml-[13.5px] flex shrink-0">
        <Cell>
          <rect x={-23} y={-31.700} width={46} height={30} rx={1.500} fill="#f3e4d6" />
          <rect x={-21.500} y={-29.500} width={43} height={26} fill="#c98a4a" />
          <rect x={-20} y={-27} width={40} height={22} fill="#dcb05e" />
          <path d="M-17 -26 h13 l5 5 v8 h-18 Z" fill="#f0f0f0" />
          <rect x={11} y={-25} width={5.500} height={9} rx={1} fill="none" stroke="#7a5421" strokeWidth={1.400} />
          <path d="M-28.500 -17 a2 2 0 0 1 2 -2 H-17 l3 4.500 H26.500 a2 2 0 0 1 2 2 V26 H-28.500 Z" fill="url(#folder)" />
          <path d="M-28.500 24.500 H28.500" stroke="#4fb4e6" strokeWidth={1.200} />
        </Cell>
        <Cell>
          <path d="M-22 -25 a2 2 0 0 1 2 -2 H-10 l3 4 H22 v8 h-44 Z" fill="#a6e4fb" />
          <path d="M-25.500 -20 a2 2 0 0 1 2 -2 H-14 l3 4 H25 v8 h-50 Z" fill="#8ad9f9" stroke="#6fc6ee" strokeWidth={0.600} />
          <path d="M-28.500 -15 a2 2 0 0 1 2 -2 H-17 l3 3.500 H26.500 a2 2 0 0 1 2 2 V26 H-28.500 Z" fill="url(#folder)" />
          <path d="M-28.500 24.500 H28.500" stroke="#4fb4e6" strokeWidth={1.200} />
        </Cell>
        <Cell>
          <rect x={-32} y={-17.700} width={64} height={35.700} fill="#fcfcfc" />
          <rect x={-32} y={-17.700} width={64} height={2.500} fill="#c5c8ca" />
          <rect x={-32} y={-15} width={4} height={31} fill="#eceef0" />
          <path d="M-26 -12 h10 M-24 -9 h8 M-22 -6 h13 M-20 -3 h9 M-20 0 h12 M-20 3 h8 M-22 6 h8 M-24 9 h12" stroke="#9bb6b8" strokeWidth={1.100} />
          <path d="M-32 16.500 H10" stroke="#a0a3a5" strokeWidth={2} />
          <g transform="translate(18 20) scale(0.38)"><MonoMark /><g transform="translate(15.500 8) scale(0.55)"><UnityMark /></g></g>
        </Cell>
        <Cell>
          <rect x={-32} y={-15} width={64} height={30.700} fill="#fcfcfc" />
          <rect x={-32} y={-15} width={64} height={4} fill="#cfd2d4" />
          <rect x={18} y={-11} width={14} height={26.700} fill="#eeeff0" />
          <rect x={-32} y={-11} width={5.500} height={26.700} fill="#e8e9eb" />
          <text x={-23} y={5.500} fontSize={4.500} fill="#444" className="font-['Inter']">Text Mining</text>
          <path d="M-23 8.500 h18" stroke="#e0a0a0" strokeWidth={0.800} />
          <g transform="translate(20.500 20.500) scale(0.4)"><KeynoteStand /></g>
        </Cell>
        <Cell>
          <rect x={-32} y={-15} width={64} height={30.700} fill="#fcfcfc" />
          <rect x={-32} y={-15} width={64} height={4} fill="#cfd2d4" />
          <rect x={18} y={-11} width={14} height={26.700} fill="#eeeff0" />
          <rect x={-32} y={-11} width={5.500} height={26.700} fill="#e8e9eb" />
          <rect x={-31.500} y={-3} width={5} height={3} fill="#111" />
          <path d="M-23 -6 h24" stroke="#555" strokeWidth={1.400} />
          <path d="M-23 -2 h16 M-23 1 h36 M-23 6.500 h30 M-23 9 h10" stroke="#8fbf6a" strokeWidth={1.100} />
          <path d="M-23 3.800 h20" stroke="#777" strokeWidth={1} />
          <rect x={-26} y={13.500} width={44} height={2.200} fill="#5aa53a" />
          <g transform="translate(20.500 20.500) scale(0.4)"><KeynoteStand /></g>
        </Cell>
        <Cell>
          <rect x={-32} y={-19.400} width={64} height={39} fill="#f4f5f6" />
          <rect x={-32} y={-19.400} width={64} height={3.500} fill="#d5d8da" />
          <rect x={-18} y={-16} width={50} height={42} fill="none" />
          <rect x={-18} y={-16} width={50} height={35.600} fill="url(#ppt)" />
          <rect x={-31} y={-13.500} width={10.500} height={14.500} fill="#0f5596" />
          <path d="M-28.500 -2 l3 -8 l3 8 l-3 -2 Z" fill="#e8622b" />
          <rect x={-29} y={5} width={7} height={9} fill="#dcdcdc" />
          <path d="M-2 19 C3 15 6 2 10 -1 C13 6 14 14 20 19 L12 17 L6 19 Z" fill="#e4572a" />
          <path d="M10 -1 C13 6 14 14 20 19 L13 14 Z" fill="#8e2216" />
          <path d="M-14 -10.500 h8" stroke="#fff" strokeWidth={1.600} />
          <path d="M-14 -6.500 h5" stroke="#9fc4e4" strokeWidth={1} />
          <g transform="translate(19.500 21) scale(0.37)"><PhotoStack /></g>
        </Cell>
        <Cell>
          <path d="M-24 -26 L-18 26 C-14 32 14 32 18 26 L24 -26 Z" fill="url(#bin)" opacity={0.950} />
          <path d="M-15 -16 L-12 24 M-5 -14 L-4 27 M6 -14 L5 27 M15 -16 L12 24" stroke="#c9c8c6" strokeWidth={1.500} opacity={0.400} />
          <ellipse cy={-25} rx={24} ry={5} fill="#8f999f" />
          <path d="M-20 -25 L-15 -31 L-8 -28 L-3 -32 L3 -27 L9 -31 L18 -26 L14 -20 L4 -18 L-10 -19 Z" fill="#ece9e4" />
          <path d="M-16 -26 L-11 -29 L-8 -23 Z M0 -26 L4 -20 L-3 -20 Z M8 -27 L13 -22 L7 -20 Z M-12 -22 l4 2 l-5 1 Z M10 -29 l5 3 l-3 1 Z" fill="#3c3c42" />
          <path d="M-8 -24 l5 -2 l1 3 Z" fill="#2fb4d8" />
          <path d="M4 -26 l3 3 l-3 2 Z" fill="#c2452e" />
          <ellipse cy={-25} rx={24} ry={5} fill="none" stroke="#e6eaec" strokeWidth={1.200} />
        </Cell>
      </div>
    </div>
  );
}

/* ---------- Desktop ---------- */

export default function App() {
  return (
    <div className="flex h-[1600px] w-[2560px] flex-col overflow-hidden bg-[linear-gradient(90deg,#07597a_0%,#074a63_3%,#0a4f62_30%,#073f50_55%,#0a5568_80%,#0e6680_92%,#0a5068_100%)] font-['Inter','Liberation_Sans',sans-serif]">
      <Defs />
      <MenuBar />
      <div className="flex h-[1448px] shrink-0 flex-col overflow-hidden rounded-[10px] bg-white shadow-[0_4px_30px_rgba(0,0,0,0.5)]">
        <Toolbar />
        <TabBar />
        <div className="flex-1 overflow-hidden">
          <Leaderboard />
        </div>
      </div>
      <div className="relative mt-[16px] shrink-0">
        <Dock />
      </div>
    </div>
  );
}
